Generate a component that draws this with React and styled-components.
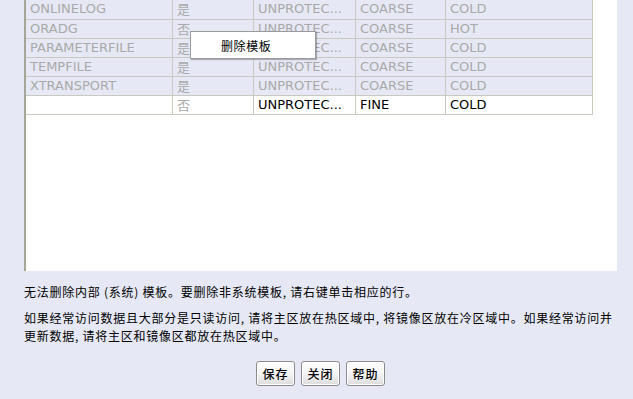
import React from 'react';
import styled, { createGlobalStyle } from 'styled-components';

const rows = [
  { name: 'ONLINELOG', sys: '是', prot: 'UNPROTEC...', grain: 'COARSE', zone: 'COLD', off: true },
  { name: 'ORADG', sys: '否', prot: 'UNPROTEC...', grain: 'COARSE', zone: 'HOT', off: true },
  { name: 'PARAMETERFILE', sys: '是', prot: 'UNPROTEC...', grain: 'COARSE', zone: 'COLD', off: true },
  { name: 'TEMPFILE', sys: '是', prot: 'UNPROTEC...', grain: 'COARSE', zone: 'COLD', off: true },
  { name: 'XTRANSPORT', sys: '是', prot: 'UNPROTEC...', grain: 'COARSE', zone: 'COLD', off: true },
  { name: '', sys: '否', prot: 'UNPROTEC...', grain: 'FINE', zone: 'COLD', off: false },
];

const cols = [147, 81, 102, 90, 147];

const Global = createGlobalStyle`
  body {
    margin: 0;
    background: #e6e9f5;
    font-family: "DejaVu Sans", "Noto Sans CJK SC", sans-serif;
  }
`;

const Page = styled.div`
  width: 633px;
  height: 399px;
  padding: 0 16px 0 24px;
  box-sizing: border-box;
  overflow: hidden;
  position: relative;
`;

const ScrollPane = styled.div`
  height: 271px;
  background: #fff;
  border-left: 2px solid #a6a698;
  box-sizing: border-box;
  overflow: hidden;
`;

const Grid = styled.table`
  border-collapse: collapse;
  table-layout: fixed;
  width: 567px;
  margin-left: -1px;
`;

const Row = styled.tr`
  height: 19px;
  background: ${p => (p.$off ? '#e6e9f5' : '#fff')};
  color: ${p => (p.$off ? '#a9a9a9' : '#000')};
`;

const Cell = styled.td`
  border: 1px solid #c9c9bf;
  border-top: none;
  padding: 0 4px;
  font-size: 13px;
  line-height: 18px;
  white-space: nowrap;
  overflow: hidden;
  color: ${p => (p.$dim ? '#a9a9a9' : 'inherit')};
  font-family: ${p => (p.$cjk ? '"Noto Sans CJK SC", sans-serif' : '"DejaVu Sans", sans-serif')};
`;

const Menu = styled.div`
  position: absolute;
  left: 190px;
  top: 31px;
  width: 126px;
  height: 28px;
  box-sizing: border-box;
  background: #fff;
  border: 1px solid #9a9a9a;
  box-shadow: 1px 1px 1px rgba(0, 0, 0, 0.25);
  display: flex;
  align-items: center;
  padding-left: 30px;
  font-family: "Noto Sans CJK SC", sans-serif;
  font-size: 12px;
  letter-spacing: 0.6px;
  color: #000;
`;

const Note = styled.p`
  margin: ${p => p.$top}px 0 0;
  font-family: "Noto Sans CJK SC", sans-serif;
  font-size: 12px;
  letter-spacing: 0.75px;
  line-height: 18px;
  color: #000;
  white-space: nowrap;
`;

const Buttons = styled.div`
  display: flex;
  justify-content: center;
  gap: 6px;
  margin-top: 16px;
`;

const Button = styled.button`
  width: 39px;
  height: 25px;
  padding: 0;
  border: 1px solid #8c8c8c;
  border-radius: 3px;
  background: linear-gradient(#ffffff, #f4f4f4 50%, #dcdcdc);
  box-shadow: inset 0 0 0 1px #fff;
  font-family: "Noto Sans CJK SC", sans-serif;
  font-size: 12px;
  font-weight: 500;
  letter-spacing: 1px;
  color: #000;
`;

export default function App() {
  return (
    <Page>
      <Global />
      <ScrollPane>
        <Grid>
          <colgroup>
            {cols.map((w, i) => <col key={i} style={{ width: w }} />)}
          </colgroup>
          <tbody>
            {rows.map((r, i) => (
              <Row key={i} $off={r.off}>
                <Cell>{r.name}</Cell>
                <Cell $cjk $dim>{r.sys}</Cell>
                <Cell>{r.prot}</Cell>
                <Cell>{r.grain}</Cell>
                <Cell>{r.zone}</Cell>
              </Row>
            ))}
          </tbody>
        </Grid>
      </ScrollPane>
      <Menu>删除模板</Menu>
      <Note $top={12}>无法删除内部 (系统) 模板。要删除非系统模板, 请右键单击相应的行。</Note>
      <Note $top={8}>
        如果经常访问数据且大部分是只读访问, 请将主区放在热区域中, 将镜像区放在冷区域中。如果经常访问并
        <br />
        更新数据, 请将主区和镜像区都放在热区域中。
      </Note>
      <Buttons>
        <Button>保存</Button>
        <Button>关闭</Button>
        <Button>帮助</Button>
      </Buttons>
    </Page>
  );
}
